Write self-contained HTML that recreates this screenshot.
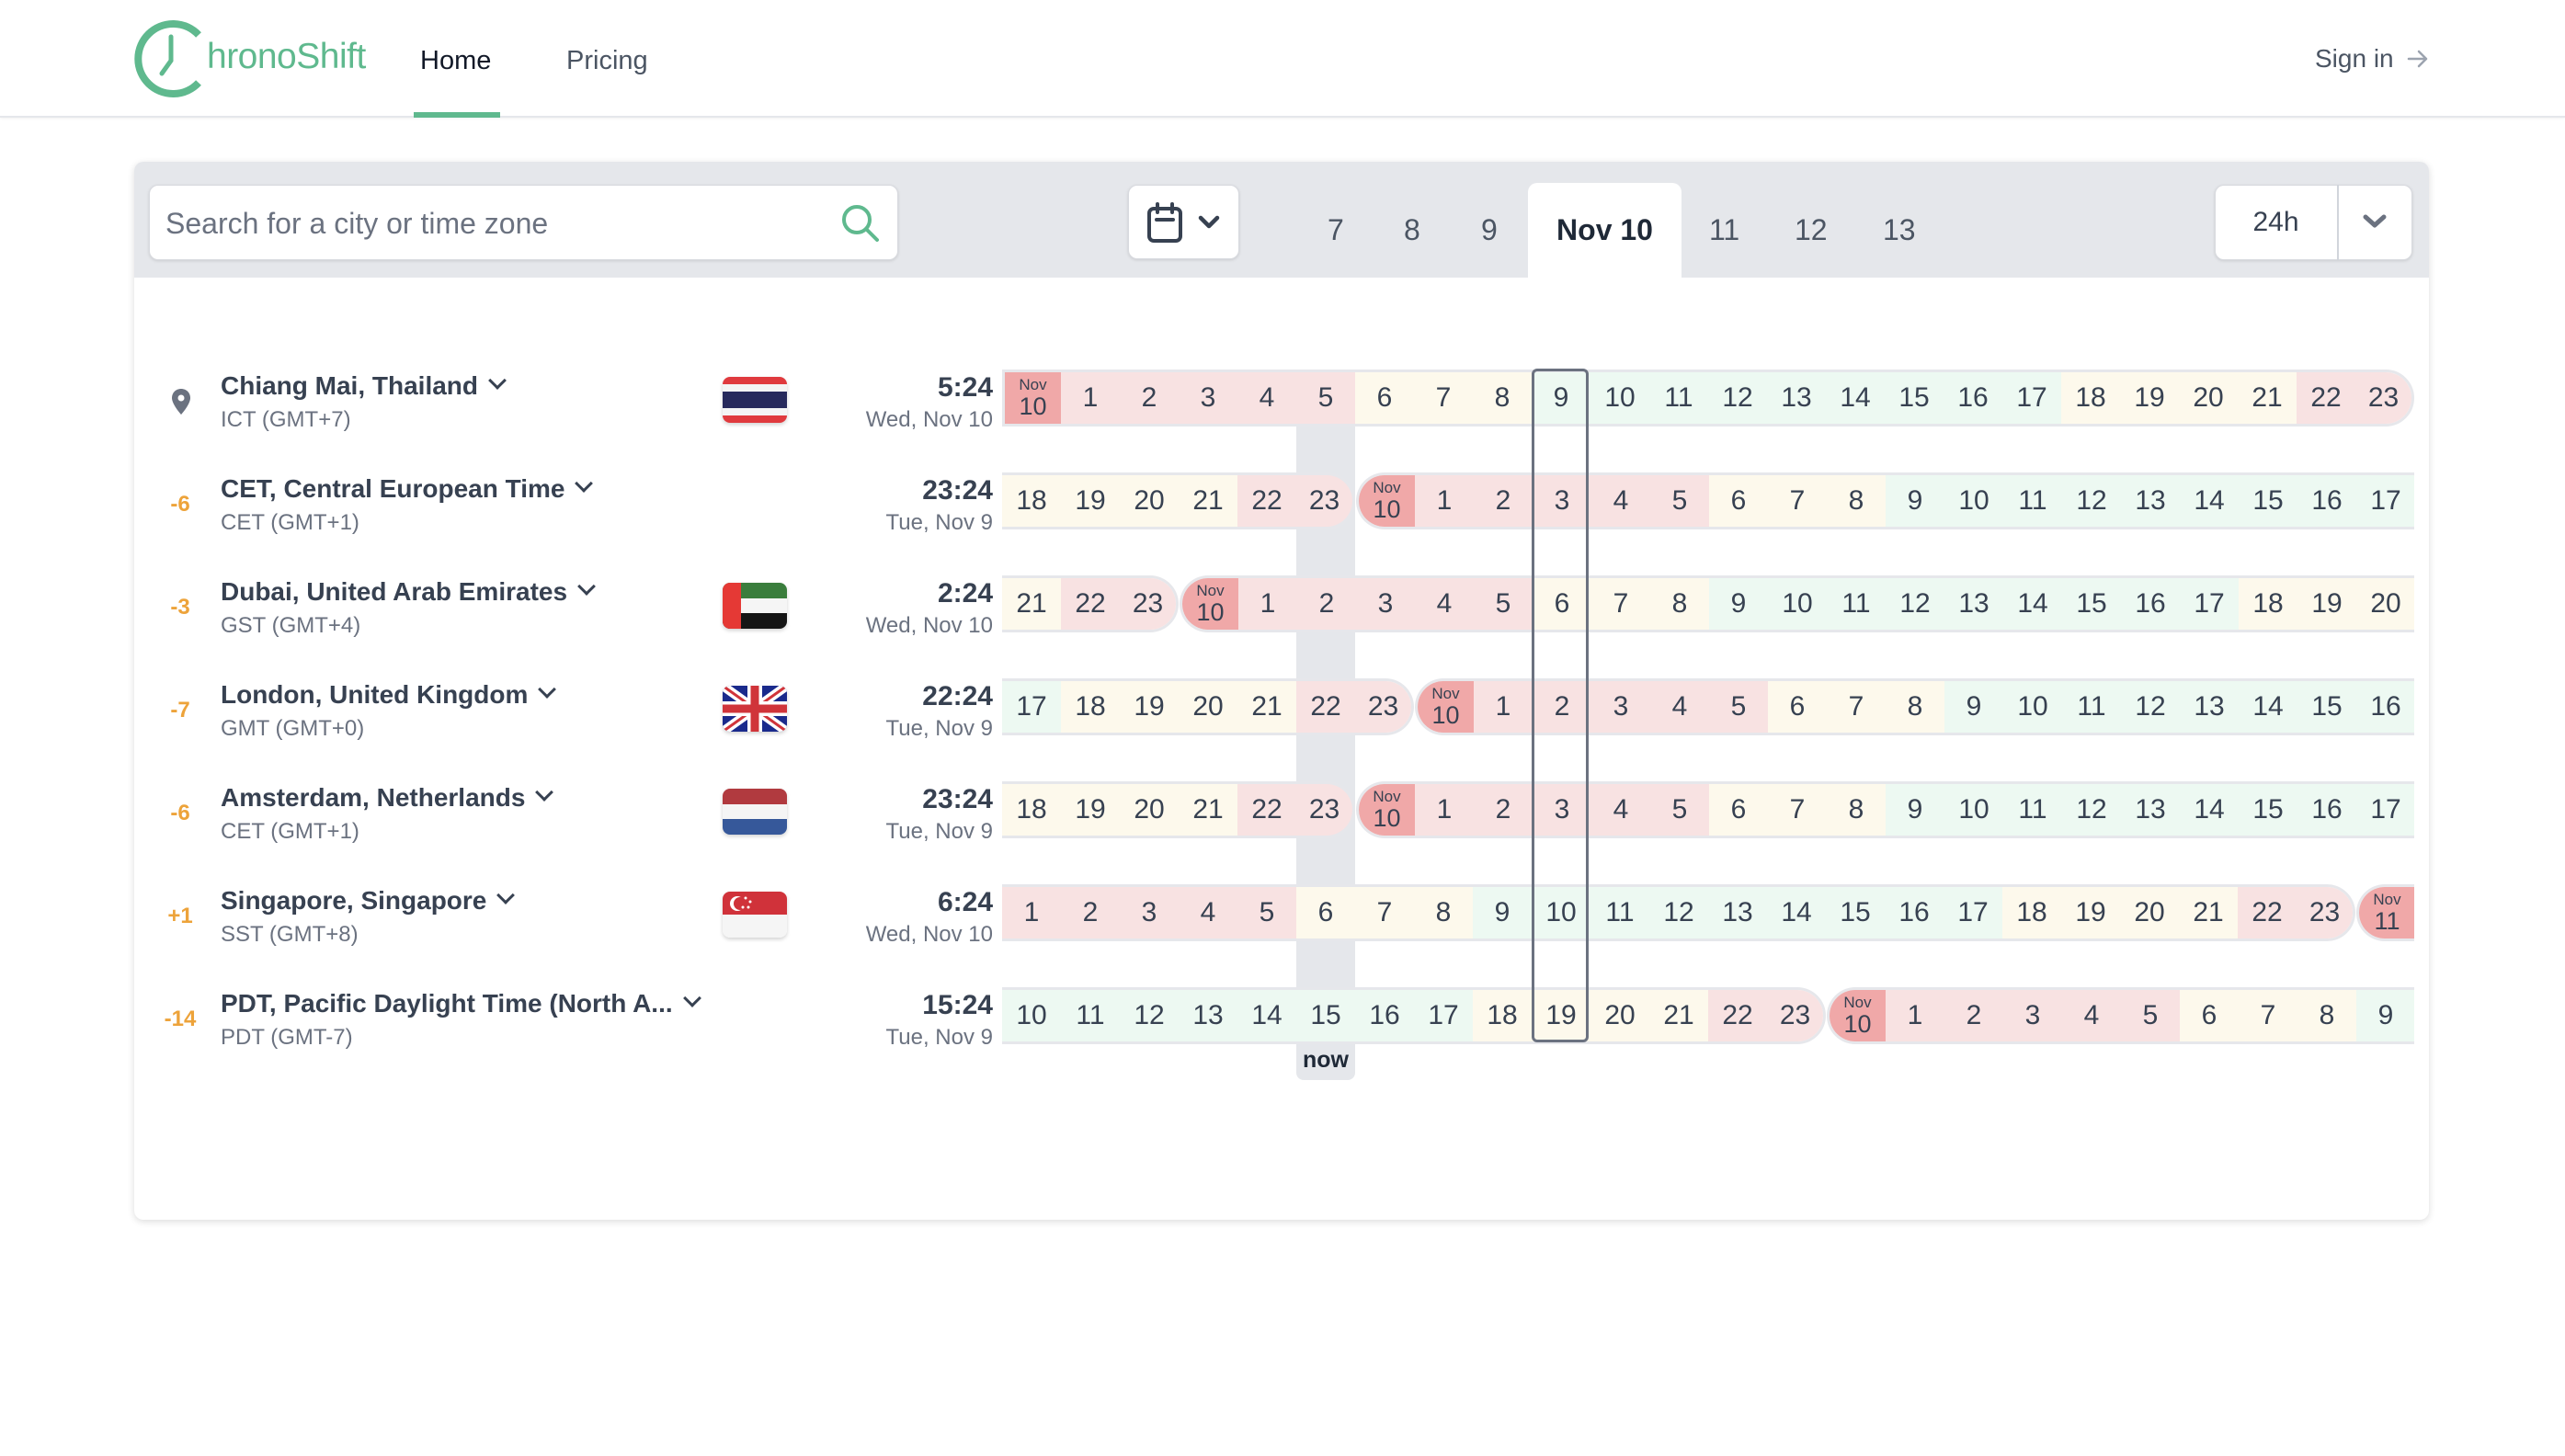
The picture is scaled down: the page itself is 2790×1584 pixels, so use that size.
<!DOCTYPE html>
<html><head><meta charset="utf-8"><style>
*{box-sizing:border-box;margin:0;padding:0}
body{width:2790px;height:1584px;background:#fff;font-family:"Liberation Sans",sans-serif;position:relative;overflow:hidden;color:#374151}
.a{position:absolute}
.hdr{left:0;top:0;width:2790px;height:128px;border-bottom:2px solid #e5e7eb;box-shadow:0 1px 3px rgba(0,0,0,.06)}
.card{left:146px;top:176px;width:2496px;height:1151px;border-radius:10px;box-shadow:0 2px 8px rgba(0,0,0,.14);background:#fff;overflow:hidden}
.bar{left:0;top:0;width:2496px;height:126px;background:#e5e7eb}
.wbox{background:#fff;border-radius:10px;box-shadow:0 1px 3px rgba(0,0,0,.12);border:1px solid #d8dadf}
.tab{font-size:32px;color:#4b5563;top:232px}
.s{position:absolute;height:62px;display:flex;border-top:3px solid #e6e7eb;border-bottom:3px solid #e6e7eb;overflow:hidden}
.s i{font-style:normal;width:64px;flex:none;height:56px;display:flex;align-items:center;justify-content:center;font-size:30px;color:#374151}
.n{background:#f8e2e2}.y{background:#fdf9ec}.g{background:#edf9f2}
.d{background:#f0a8a8;flex-direction:column;line-height:1}
.d b{font-weight:normal;font-size:17px}.d span{font-size:27px;margin-top:2px}
.rl{border-left:3px solid #e6e7eb;border-radius:32px 0 0 32px}
.rr{border-right:3px solid #e6e7eb;border-radius:0 32px 32px 0}
.s.rl i:first-child{width:61px}
.s.rr i:last-child{width:61px}
.nm{left:240px;font-size:28px;font-weight:bold;color:#374151}
.sub{left:240px;font-size:24px;color:#6b7280}
.off{width:60px;left:166px;text-align:center;font-size:24px;font-weight:bold;color:#eda33a}
.tm{right:1710px;text-align:right;font-size:30px;font-weight:bold;color:#374151}
.dt{right:1710px;text-align:right;font-size:24px;color:#6b7280}
.fl{left:786px;width:70px;height:50px;border-radius:8px;overflow:hidden;box-shadow:0 2px 4px rgba(0,0,0,.18)}
.chev{display:inline-block;width:14px;height:14px;border-right:3px solid #374151;border-bottom:3px solid #374151;transform:rotate(45deg);margin-left:14px;position:relative;top:-8px}
</style></head><body>
<div class="a hdr"></div>
<svg class="a" style="left:144px;top:22px" width="84" height="84" viewBox="0 0 84 84"><path d="M72 16 A38 38 0 1 0 72 68" fill="none" stroke="#5fb98e" stroke-width="8"/><path d="M42 18 V44 L32 58" fill="none" stroke="#5fb98e" stroke-width="5" stroke-linecap="round"/></svg>
<div class="a" style="left:225px;top:40px;font-size:39px;color:#5fb98e;letter-spacing:-0.5px">hronoShift</div>
<div class="a" style="left:457px;top:50px;font-size:29px;color:#111827">Home</div>
<div class="a" style="left:450px;top:122px;width:94px;height:6px;background:#5fb98e"></div>
<div class="a" style="left:616px;top:50px;font-size:29px;color:#4b5563">Pricing</div>
<div class="a" style="left:2518px;top:48px;font-size:28px;color:#4b5563">Sign in</div>
<svg class="a" style="left:2618px;top:53px" width="24" height="22" viewBox="0 0 24 22"><path d="M2 11H21M13 3L21 11L13 19" fill="none" stroke="#9ca3af" stroke-width="2.5" stroke-linecap="round" stroke-linejoin="round"/></svg>

<div class="a card">
<div class="a bar"></div>
</div>
<div class="a wbox" style="left:162px;top:201px;width:815px;height:82px"></div>
<div class="a" style="left:180px;top:225px;font-size:32px;color:#6b7280">Search for a city or time zone</div>
<svg class="a" style="left:913px;top:220px" width="46" height="46" viewBox="0 0 46 46"><circle cx="19" cy="19" r="14" fill="none" stroke="#5fb98e" stroke-width="4"/><path d="M29 29 L41 41" stroke="#5fb98e" stroke-width="4" stroke-linecap="round"/></svg>
<div class="a wbox" style="left:1227px;top:201px;width:121px;height:81px"></div>
<svg class="a" style="left:1246px;top:220px" width="90" height="46" viewBox="0 0 90 46"><rect x="4" y="7" width="34" height="35" rx="5" fill="none" stroke="#374151" stroke-width="4"/><path d="M13 2V11M29 2V11M12 19H30" stroke="#374151" stroke-width="4" stroke-linecap="round"/><path d="M60 17L69 26L78 17" fill="none" stroke="#374151" stroke-width="4.5" stroke-linecap="round" stroke-linejoin="round"/></svg>
<div class="a tab" style="left:1444px">7</div>
<div class="a tab" style="left:1527px">8</div>
<div class="a tab" style="left:1611px">9</div>
<div class="a" style="left:1662px;top:199px;width:167px;height:104px;background:#fff;border-radius:10px 10px 0 0"></div>
<div class="a" style="left:1662px;top:232px;width:167px;text-align:center;font-size:32px;font-weight:bold;color:#1f2937">Nov 10</div>
<div class="a tab" style="left:1859px">11</div>
<div class="a tab" style="left:1952px">12</div>
<div class="a tab" style="left:2048px">13</div>
<div class="a wbox" style="left:2409px;top:201px;width:215px;height:82px"></div>
<div class="a" style="left:2542px;top:201px;width:2px;height:82px;background:#d1d5db"></div>
<div class="a" style="left:2409px;top:225px;width:133px;text-align:center;font-size:30px;color:#374151">24h</div>
<svg class="a" style="left:2568px;top:229px" width="30" height="24" viewBox="0 0 30 24"><path d="M5 7L15 16L25 7" fill="none" stroke="#6b7280" stroke-width="5" stroke-linecap="round" stroke-linejoin="round"/></svg>

<div class="a" style="left:1410px;top:430px;width:64px;height:745px;background:#e5e7eb;border-radius:0 0 8px 8px"></div>
<div class="a" style="left:1410px;top:1139px;width:64px;text-align:center;font-size:25px;font-weight:bold;color:#1f2937">now</div>

<!-- Row 1 -->
<svg class="a" style="left:186px;top:422px" width="22" height="30" viewBox="0 0 22 30"><path d="M11 1C5 1 1 5.5 1 11C1 18 11 29 11 29S21 18 21 11C21 5.5 17 1 11 1Z" fill="#6b7280"/><circle cx="11" cy="11" r="3.5" fill="#fff"/></svg>
<div class="a nm" style="top:404px">Chiang Mai, Thailand<span class="chev"></span></div>
<div class="a sub" style="top:443px">ICT (GMT+7)</div>
<div class="a fl" style="top:410px"><svg width="70" height="50" viewBox="0 0 70 50"><rect width="70" height="50" fill="#e03a3e"/><rect y="8" width="70" height="34" fill="#f4f4f4"/><rect y="16" width="70" height="18" fill="#272a5c"/></svg></div>
<div class="a tm" style="top:405px">5:24</div>
<div class="a dt" style="top:443px">Wed, Nov 10</div>
<div class="s rl rr" style="left:1090px;top:402px"><i class="d"><b>Nov</b><span>10</span></i><i class="n">1</i><i class="n">2</i><i class="n">3</i><i class="n">4</i><i class="n">5</i><i class="y">6</i><i class="y">7</i><i class="y">8</i><i class="g">9</i><i class="g">10</i><i class="g">11</i><i class="g">12</i><i class="g">13</i><i class="g">14</i><i class="g">15</i><i class="g">16</i><i class="g">17</i><i class="y">18</i><i class="y">19</i><i class="y">20</i><i class="y">21</i><i class="n">22</i><i class="n">23</i></div>

<!-- Row 2 -->
<div class="a off" style="top:535px">-6</div>
<div class="a nm" style="top:516px">CET, Central European Time<span class="chev"></span></div>
<div class="a sub" style="top:555px">CET (GMT+1)</div>
<div class="a tm" style="top:517px">23:24</div>
<div class="a dt" style="top:555px">Tue, Nov 9</div>
<div class="s rr" style="left:1090px;top:514px"><i class="y">18</i><i class="y">19</i><i class="y">20</i><i class="y">21</i><i class="n">22</i><i class="n">23</i></div>
<div class="s rl" style="left:1475px;top:514px;width:1151px"><i class="d"><b>Nov</b><span>10</span></i><i class="n">1</i><i class="n">2</i><i class="n">3</i><i class="n">4</i><i class="n">5</i><i class="y">6</i><i class="y">7</i><i class="y">8</i><i class="g">9</i><i class="g">10</i><i class="g">11</i><i class="g">12</i><i class="g">13</i><i class="g">14</i><i class="g">15</i><i class="g">16</i><i class="g">17</i></div>

<!-- Row 3 -->
<div class="a off" style="top:647px">-3</div>
<div class="a nm" style="top:628px">Dubai, United Arab Emirates<span class="chev"></span></div>
<div class="a sub" style="top:667px">GST (GMT+4)</div>
<div class="a fl" style="top:634px"><svg width="70" height="50" viewBox="0 0 70 50"><rect width="70" height="17" fill="#3a7d3c"/><rect y="17" width="70" height="16" fill="#f5f5f5"/><rect y="33" width="70" height="17" fill="#151515"/><rect width="20" height="50" fill="#e53935"/></svg></div>
<div class="a tm" style="top:629px">2:24</div>
<div class="a dt" style="top:667px">Wed, Nov 10</div>
<div class="s rr" style="left:1090px;top:626px"><i class="y">21</i><i class="n">22</i><i class="n">23</i></div>
<div class="s rl" style="left:1283px;top:626px;width:1343px"><i class="d"><b>Nov</b><span>10</span></i><i class="n">1</i><i class="n">2</i><i class="n">3</i><i class="n">4</i><i class="n">5</i><i class="y">6</i><i class="y">7</i><i class="y">8</i><i class="g">9</i><i class="g">10</i><i class="g">11</i><i class="g">12</i><i class="g">13</i><i class="g">14</i><i class="g">15</i><i class="g">16</i><i class="g">17</i><i class="y">18</i><i class="y">19</i><i class="y">20</i></div>

<!-- Row 4 -->
<div class="a off" style="top:759px">-7</div>
<div class="a nm" style="top:740px">London, United Kingdom<span class="chev"></span></div>
<div class="a sub" style="top:779px">GMT (GMT+0)</div>
<div class="a fl" style="top:746px"><svg width="70" height="50" viewBox="0 0 70 50"><rect width="70" height="50" fill="#1a2a8c"/><path d="M0 0L70 50M70 0L0 50" stroke="#fff" stroke-width="10"/><path d="M0 0L70 50M70 0L0 50" stroke="#d0343a" stroke-width="3"/><path d="M35 0V50M0 25H70" stroke="#fff" stroke-width="16"/><path d="M35 0V50M0 25H70" stroke="#d0343a" stroke-width="9"/></svg></div>
<div class="a tm" style="top:741px">22:24</div>
<div class="a dt" style="top:779px">Tue, Nov 9</div>
<div class="s rr" style="left:1090px;top:738px"><i class="g">17</i><i class="y">18</i><i class="y">19</i><i class="y">20</i><i class="y">21</i><i class="n">22</i><i class="n">23</i></div>
<div class="s rl" style="left:1539px;top:738px;width:1087px"><i class="d"><b>Nov</b><span>10</span></i><i class="n">1</i><i class="n">2</i><i class="n">3</i><i class="n">4</i><i class="n">5</i><i class="y">6</i><i class="y">7</i><i class="y">8</i><i class="g">9</i><i class="g">10</i><i class="g">11</i><i class="g">12</i><i class="g">13</i><i class="g">14</i><i class="g">15</i><i class="g">16</i></div>

<!-- Row 5 -->
<div class="a off" style="top:871px">-6</div>
<div class="a nm" style="top:852px">Amsterdam, Netherlands<span class="chev"></span></div>
<div class="a sub" style="top:891px">CET (GMT+1)</div>
<div class="a fl" style="top:858px"><svg width="70" height="50" viewBox="0 0 70 50"><rect width="70" height="17" fill="#b13a3f"/><rect y="17" width="70" height="16" fill="#f5f5f5"/><rect y="33" width="70" height="17" fill="#36589a"/></svg></div>
<div class="a tm" style="top:853px">23:24</div>
<div class="a dt" style="top:891px">Tue, Nov 9</div>
<div class="s rr" style="left:1090px;top:850px"><i class="y">18</i><i class="y">19</i><i class="y">20</i><i class="y">21</i><i class="n">22</i><i class="n">23</i></div>
<div class="s rl" style="left:1475px;top:850px;width:1151px"><i class="d"><b>Nov</b><span>10</span></i><i class="n">1</i><i class="n">2</i><i class="n">3</i><i class="n">4</i><i class="n">5</i><i class="y">6</i><i class="y">7</i><i class="y">8</i><i class="g">9</i><i class="g">10</i><i class="g">11</i><i class="g">12</i><i class="g">13</i><i class="g">14</i><i class="g">15</i><i class="g">16</i><i class="g">17</i></div>

<!-- Row 6 -->
<div class="a off" style="top:983px">+1</div>
<div class="a nm" style="top:964px">Singapore, Singapore<span class="chev"></span></div>
<div class="a sub" style="top:1003px">SST (GMT+8)</div>
<div class="a fl" style="top:970px"><svg width="70" height="50" viewBox="0 0 70 50"><rect width="70" height="25" fill="#d0323a"/><rect y="25" width="70" height="25" fill="#f5f5f5"/><circle cx="16" cy="13" r="8" fill="#fff"/><circle cx="19" cy="13" r="7" fill="#d0323a"/><circle cx="25" cy="7" r="1.5" fill="#fff"/><circle cx="30" cy="11" r="1.5" fill="#fff"/><circle cx="22" cy="17" r="1.5" fill="#fff"/><circle cx="28" cy="17" r="1.5" fill="#fff"/></svg></div>
<div class="a tm" style="top:965px">6:24</div>
<div class="a dt" style="top:1003px">Wed, Nov 10</div>
<div class="s rr" style="left:1090px;top:962px"><i class="n">1</i><i class="n">2</i><i class="n">3</i><i class="n">4</i><i class="n">5</i><i class="y">6</i><i class="y">7</i><i class="y">8</i><i class="g">9</i><i class="g">10</i><i class="g">11</i><i class="g">12</i><i class="g">13</i><i class="g">14</i><i class="g">15</i><i class="g">16</i><i class="g">17</i><i class="y">18</i><i class="y">19</i><i class="y">20</i><i class="y">21</i><i class="n">22</i><i class="n">23</i></div>
<div class="s rl" style="left:2563px;top:962px;width:63px"><i class="d"><b>Nov</b><span>11</span></i></div>

<!-- Row 7 -->
<div class="a off" style="top:1095px">-14</div>
<div class="a nm" style="top:1076px">PDT, Pacific Daylight Time (North A...<span class="chev"></span></div>
<div class="a sub" style="top:1115px">PDT (GMT-7)</div>
<div class="a tm" style="top:1077px">15:24</div>
<div class="a dt" style="top:1115px">Tue, Nov 9</div>
<div class="s rr" style="left:1090px;top:1074px"><i class="g">10</i><i class="g">11</i><i class="g">12</i><i class="g">13</i><i class="g">14</i><i class="g">15</i><i class="g">16</i><i class="g">17</i><i class="y">18</i><i class="y">19</i><i class="y">20</i><i class="y">21</i><i class="n">22</i><i class="n">23</i></div>
<div class="s rl" style="left:1987px;top:1074px;width:639px"><i class="d"><b>Nov</b><span>10</span></i><i class="n">1</i><i class="n">2</i><i class="n">3</i><i class="n">4</i><i class="n">5</i><i class="y">6</i><i class="y">7</i><i class="y">8</i><i class="g">9</i></div>

<div class="a" style="left:1666px;top:401px;width:62px;height:733px;border:3px solid #6b7280;border-radius:6px"></div>
</body></html>
